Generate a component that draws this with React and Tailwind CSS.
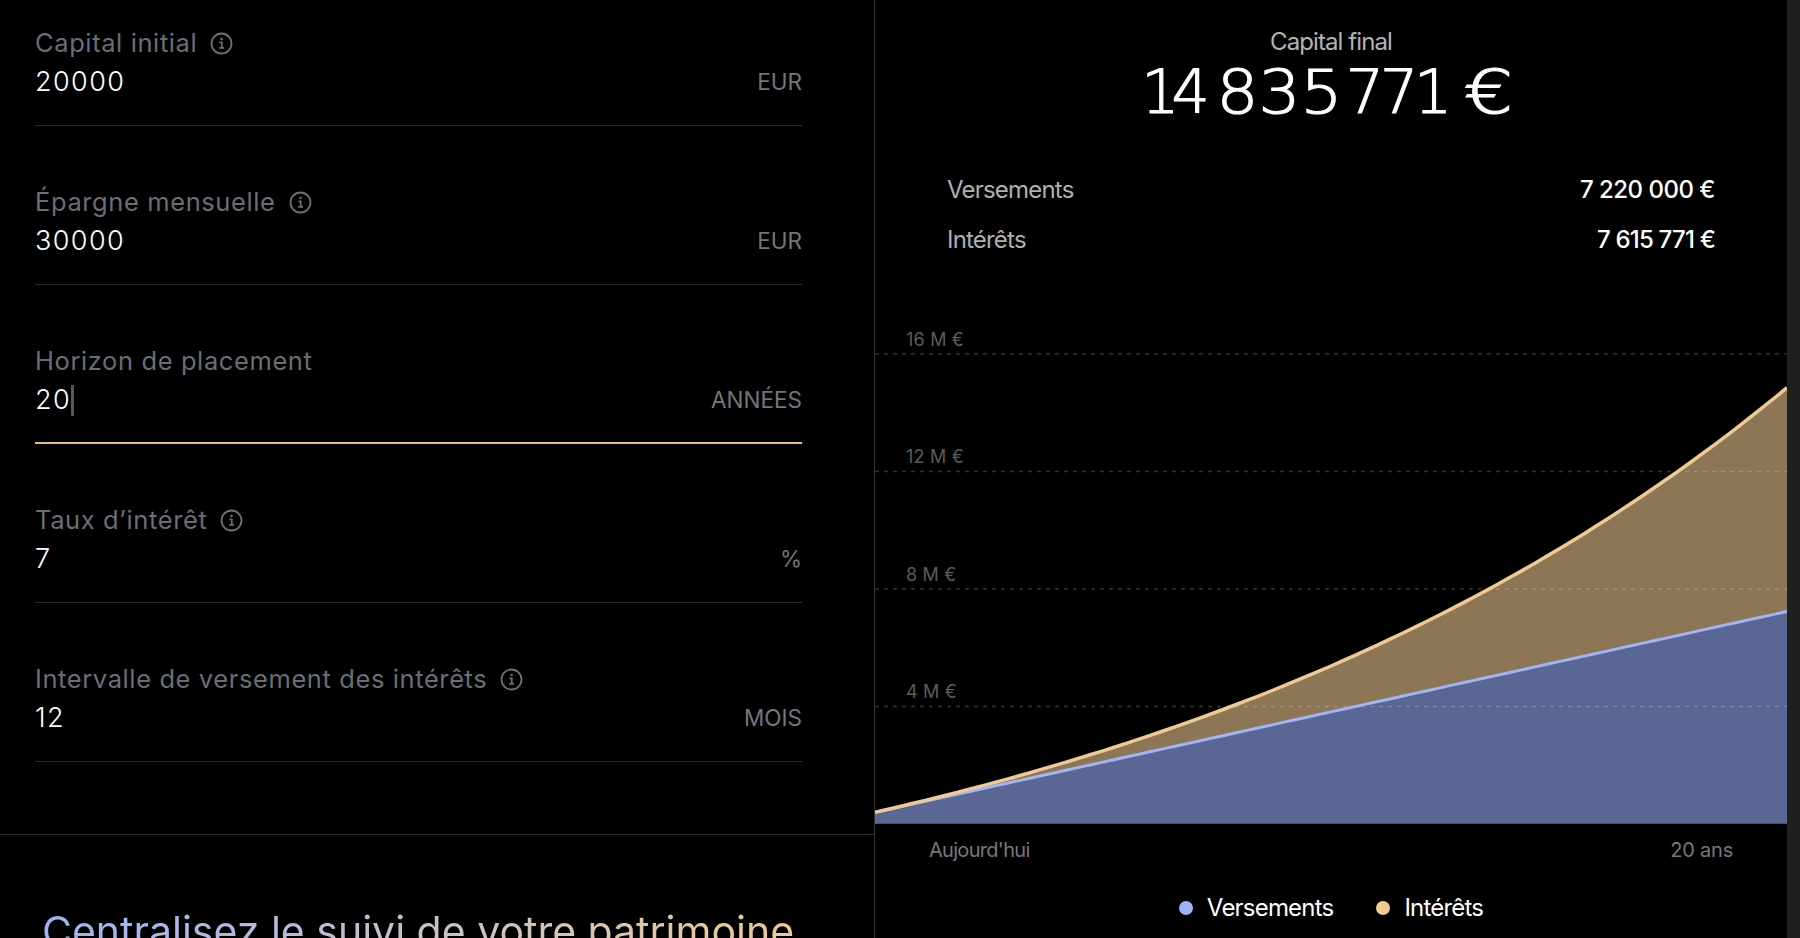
import React from "react";

const fields = [
  { label: "Capital initial", value: "20000", unit: "EUR", info: true },
  { label: "Épargne mensuelle", value: "30000", unit: "EUR", info: true },
  { label: "Horizon de placement", value: "20", unit: "ANNÉES", active: true },
  { label: "Taux d’intérêt", value: "7", unit: "%", info: true },
  { label: "Intervalle de versement des intérêts", value: "12", unit: "MOIS", info: true },
];

const ticks = [
  { label: "16 M €", y: 29 },
  { label: "12 M €", y: 146.5 },
  { label: "8 M €", y: 264 },
  { label: "4 M €", y: 381.5 },
];

// chart scale: 4 M € = 117.5px, year 1 on the left edge, year 20 on the right edge
const CHART_W = 912;
const ZERO_Y = 498.5;
const toX = (t) => ((t - 1) / 19) * CHART_W;
const toY = (v) => ZERO_Y - (v / 4000000) * 117.5;

const deposits = (t) => 20000 + 360000 * t;
const total = (t) => 20000 * Math.pow(1.07, t) + (360000 * (Math.pow(1.07, t) - 1)) / 0.07;

const buildLine = (fn) => {
  const pts = [];
  for (let t = 1; t <= 20; t += 0.25) {
    pts.push(`${toX(t).toFixed(1)} ${toY(fn(t)).toFixed(1)}`);
  }
  return "M" + pts.join(" L");
};

function InfoIcon() {
  return (
    <svg width="23" height="23" viewBox="0 0 23 23" fill="none" className="ml-[13px] shrink-0">
      <circle cx="11.5" cy="11.5" r="10" stroke="#6d7076" strokeWidth="1.8" />
      <circle cx="11.5" cy="7" r="1.3" fill="#6d7076" />
      <path d="M9.5 10.4h2.3v5.2M9.2 15.8h4.8" stroke="#6d7076" strokeWidth="1.7" />
    </svg>
  );
}

function Field({ label, value, unit, info, active }) {
  return (
    <div className={`mb-[60px] border-b ${active ? "border-[#e3bd85] border-b-2 pb-[24px]" : "border-[#2c2c2c] pb-[25px]"}`}>
      <div className="flex h-8 items-center text-[25.5px] leading-8 tracking-[0.6px] text-[#6b6e74]">
        {label}
        {info && <InfoIcon />}
      </div>
      <div className="mt-[5px] flex h-9 items-center justify-between">
        <div className="flex items-center text-[27px] font-light tracking-[1.4px] text-white">
          {value}
          {active && <span className="h-[31px] w-[3px] bg-[#55585c]" />}
        </div>
        <div className="text-[22.5px] text-[#74767a]">{unit}</div>
      </div>
    </div>
  );
}

function Chart() {
  const blue = buildLine(deposits);
  const tan = buildLine(total);
  const close = ` L${CHART_W} ${ZERO_Y} L0 ${ZERO_Y} Z`;
  return (
    <svg width={CHART_W} height="499" viewBox={`0 0 ${CHART_W} 499`} className="mt-[69px] block">
      <path d={tan + close} fill="#8c7656" />
      <path d={blue + close} fill="#5a6794" />
      {ticks.map((t) => (
        <g key={t.label}>
          <line x1="0" x2={CHART_W} y1={t.y} y2={t.y} stroke="#ffffff" strokeOpacity="0.2" strokeWidth="1.3" strokeDasharray="4 5" />
          <text x="31" y={t.y - 8.5} fontSize="18" fill="#5c5c5c" className="font-['Inter']" letterSpacing="0.2">
            {t.label}
          </text>
        </g>
      ))}
      <path d={blue} fill="none" stroke="#a0b4f6" strokeWidth="3" />
      <path d={tan} fill="none" stroke="#efca92" strokeWidth="3.5" />
    </svg>
  );
}

export default function App() {
  return (
    <div className="flex h-[938px] w-[1800px] overflow-hidden bg-black font-['Inter',sans-serif]">
      {/* Form column */}
      <div className="w-[875px] shrink-0 border-r border-[#333336]">
        <div className="h-[835px] border-b border-[#2b2c33] pt-[27px] pr-[72px] pl-[35px]">
          {fields.map((f) => (
            <Field key={f.label} {...f} />
          ))}
        </div>
        <div className="pt-[72px] pl-[42px]">
          <h2 className="w-fit whitespace-nowrap bg-gradient-to-r from-[#9db2f5] to-[#efca92] bg-clip-text text-[41px] leading-[48px] text-transparent">
            Centralisez le suivi de votre patrimoine
          </h2>
        </div>
      </div>

      {/* Result column */}
      <div className="w-[912px] shrink-0">
        <div className="pt-[26px] text-center">
          <div className="h-8 text-[24px] leading-8 tracking-[-0.9px] text-[#b4b4b4]">Capital final</div>
          {/* the wide display face isn't available, groups are stretched to match */}
          <div className="mt-[2px] flex h-16 justify-center pr-[21px] font-['DejaVu_Sans',sans-serif] text-[60px] leading-[64px] font-extralight text-white [-webkit-text-stroke:1.2px_#fff]">
            <span className="w-[73px] tracking-[-8px]">14</span>
            <span className="w-[130px] origin-left scale-x-[1.1]">835</span>
            <span className="w-[118px] tracking-[-4px]">771</span>
            <span className="w-[50px] origin-left scale-x-[1.3]">€</span>
          </div>
        </div>
        <div className="mt-[50px] flex h-8 items-center justify-between px-[72px] text-[24px] tracking-[-0.8px]">
          <span className="text-[#b0b0b0]">Versements</span>
          <span className="font-medium tracking-[-0.5px] text-white">7 220 000 €</span>
        </div>
        <div className="mt-[18px] flex h-8 items-center justify-between px-[72px] text-[24px] tracking-[-0.8px]">
          <span className="text-[#b0b0b0]">Intérêts</span>
          <span className="font-medium tracking-[-0.8px] text-white">7 615 771 €</span>
        </div>
        <Chart />
        <div className="mt-[12px] flex h-7 items-center justify-between px-[54px] text-[20px] tracking-[-0.2px] text-[#77787a]">
          <span className="tracking-[-0.7px]">Aujourd'hui</span>
          <span>20 ans</span>
        </div>
        <div className="mt-[28px] flex h-8 items-center justify-center text-[24px] tracking-[-0.8px] text-white">
          <span className="mr-[14px] h-[14px] w-[14px] rounded-full bg-[#9db2f5]" />
          <span>Versements</span>
          <span className="mr-[14px] ml-[43px] h-[14px] w-[14px] rounded-full bg-[#efca92]" />
          <span>Intérêts</span>
        </div>
      </div>

      {/* Scrollbar strip */}
      <div className="flex-1 bg-[#1f1f1f]" />
    </div>
  );
}
